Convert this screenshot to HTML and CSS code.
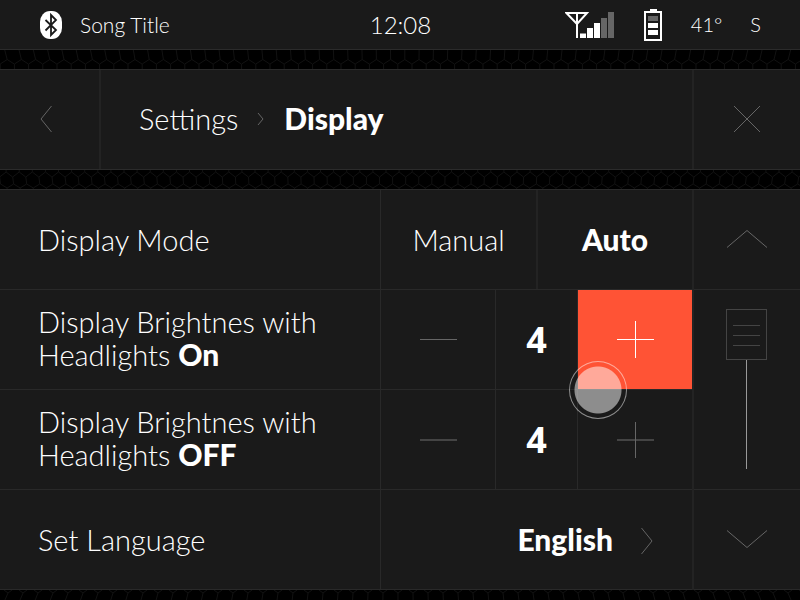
FILE: index.html
```html
<!DOCTYPE html>
<html lang="en">
<head>
<meta charset="utf-8">
<meta name="viewport" content="width=device-width, initial-scale=1">
<title>Settings – Display</title>
<link rel="stylesheet" href="styles.css">
</head>
<body>
<header class="status">
  <div class="status-left">
    <svg class="icon" width="22" height="28" viewBox="0 0 22 28" aria-hidden="true">
      <rect width="22" height="28" rx="10" ry="11" fill="#fff"/>
      <path d="M5.5 9 16 19 11 24V4l5 5L5.5 19.5" fill="none" stroke="#1a1a1a" stroke-width="1.8"/>
    </svg>
    <span>Song Title</span>
  </div>
  <time class="clock">12:08</time>
  <div class="status-right">
    <svg class="icon" width="50" height="26" viewBox="0 0 50 26" aria-hidden="true">
      <path d="M1.5 1H22L12 12ZM12 1v25" fill="none" stroke="#fff" stroke-width="2"/>
      <path d="M15 21.500h6V26h-6zM22 16h6v10h-6zM29 11h6v15h-6z" fill="#fff"/>
      <path d="M36 6h6v20h-6zM43 0h6v26h-6z" fill="#666"/>
    </svg>
    <svg class="icon" width="20" height="32" viewBox="0 0 20 32" aria-hidden="true">
      <path d="M2 3h16v28H2z" fill="none" stroke="#fff" stroke-width="2"/>
      <path d="M7 0h7v3H7zM5 14h10v5H5zM5 21h10v5H5z" fill="#fff"/>
      <path d="M5 7h10v5H5z" fill="#666"/>
    </svg>
    <span>41°</span>
    <span>S</span>
  </div>
</header>

<svg class="mesh" data-mesh="upper" aria-hidden="true"><path/></svg>

<nav class="titlebar" aria-label="Breadcrumb">
  <button class="back" type="button" aria-label="Back">
    <svg class="line-icon" width="12" height="28" viewBox="0 0 12 28"><path d="M11.500 1 1 14l10.500 13"/></svg>
  </button>
  <div class="crumbs">
    <a href="#settings">Settings</a>
    <svg class="line-icon" width="8" height="14" viewBox="0 0 8 14"><path d="M1 1l5 6-5 6"/></svg>
    <strong>Display</strong>
  </div>
  <button class="close" type="button" aria-label="Close">
    <svg class="line-icon" width="28" height="28" viewBox="0 0 28 28"><path d="M1 1l26 26M27 1 1 27"/></svg>
  </button>
</nav>

<svg class="mesh" data-mesh="middle" aria-hidden="true"><path/></svg>

<main class="panel">
  <section class="rows">
    <div class="row">
      <div class="label" id="mode">Display Mode</div>
      <div class="choice" role="group" aria-labelledby="mode">
        <button type="button" aria-pressed="false">Manual</button>
        <button type="button" aria-pressed="true">Auto</button>
      </div>
    </div>
    <div class="row">
      <div class="label" id="on">Display Brightnes with<br>Headlights <strong>On</strong></div>
      <div class="stepper" role="group" aria-labelledby="on">
        <button type="button" aria-label="Decrease">
          <svg class="line-icon" width="37" height="37" viewBox="0 0 37 37"><path d="M0 18.500h37"/></svg>
        </button>
        <output>4</output>
        <button class="active" type="button" aria-label="Increase">
          <svg class="line-icon" width="37" height="37" viewBox="0 0 37 37"><path d="M0 18.500h37M18.500 0v37"/></svg>
          <span class="touch"></span>
        </button>
      </div>
    </div>
    <div class="row">
      <div class="label" id="off">Display Brightnes with<br>Headlights <strong>OFF</strong></div>
      <div class="stepper" role="group" aria-labelledby="off">
        <button type="button" aria-label="Decrease">
          <svg class="line-icon" width="37" height="37" viewBox="0 0 37 37"><path d="M0 19h37" stroke="#444" stroke-width="2"/></svg>
        </button>
        <output>4</output>
        <button type="button" aria-label="Increase">
          <svg class="line-icon" width="37" height="37" viewBox="0 0 37 37"><path d="M0 19h37" stroke="#444" stroke-width="2"/><path d="M18.500 1v36"/></svg>
        </button>
      </div>
    </div>
    <div class="row">
      <div class="label" id="lang">Set Language</div>
      <button class="language" type="button" aria-describedby="lang">English
        <svg class="line-icon" width="12" height="28" viewBox="0 0 12 28"><path d="M.5 2 11 15 .5 28"/></svg>
      </button>
    </div>
  </section>
  <aside class="scroller">
    <button type="button" aria-label="Scroll up">
      <svg class="line-icon" width="42" height="20" viewBox="0 0 42 20"><path d="M1 18.500 21 1.500l20 17"/></svg>
    </button>
    <div class="track"><input type="range" min="0" max="100" value="0" aria-label="Scroll position"></div>
    <button type="button" aria-label="Scroll down">
      <svg class="line-icon" width="42" height="20" viewBox="0 0 42 20"><path d="M1 1.500l20 17 20-17"/></svg>
    </button>
  </aside>
</main>

<svg class="mesh mesh-last" data-mesh="lower" aria-hidden="true"><path/></svg>
<script src="mesh.js"></script>
</body>
</html>
```
FILE: styles.css
```css
* { box-sizing: border-box; }

body {
  margin: 0;
  min-height: 100vh;
  display: flex;
  flex-direction: column;
  background: #000;
  color: #fff;
  font-family: Lato, "Liberation Sans", sans-serif;
  font-size: 29px;
  font-weight: 300;
  line-height: 33px;
}

button {
  margin: 0;
  padding: 0;
  border: 0;
  background: none;
  color: inherit;
  font: inherit;
  display: flex;
  align-items: center;
  justify-content: center;
}

a { color: inherit; text-decoration: none; }

strong,
.choice [aria-pressed="true"],
.language {
  font-size: 30px;
  font-weight: 900;
}

svg { display: block; flex: none; }

.line-icon {
  fill: none;
  stroke: #666;
  stroke-width: 1;
}

.status {
  display: grid;
  grid-template-columns: 1fr auto 1fr;
  align-items: center;
  height: 50px;
  padding: 0 39px 0 40px;
  background: #1a1a1a;
  border-bottom: 1px solid #2b2b2b;
  font-size: 21px;
}

.status-left,
.status-right {
  display: flex;
  align-items: center;
}

.status-left { gap: 18px; }
.status-right { gap: 28px; justify-content: flex-end; font-size: 20px; }
.clock { font-size: 24px; }

.mesh {
  width: 100%;
  height: 19px;
  fill: none;
  stroke: #121212;
  stroke-width: 1;
}

.mesh-last { height: auto; flex: 1 0 10px; }

.titlebar {
  display: flex;
  height: 101px;
  background: #1a1a1a;
  border-top: 1px solid #2b2b2b;
  border-bottom: 1px solid #2b2b2b;
}

.titlebar > * { padding-bottom: 2px; }

.back {
  width: 101px;
  padding-right: 8px;
  border-right: 2px solid #232323;
}

.crumbs {
  flex: 1;
  display: flex;
  align-items: center;
  gap: 19px;
  padding-left: 38px;
}

.close {
  width: 13.5%;
  border-left: 2px solid #232323;
}

.panel {
  display: grid;
  grid-template-columns: 86.5% 13.5%;
  background: #1a1a1a;
  border-top: 1px solid #2b2b2b;
}

.row {
  display: grid;
  grid-template-columns: 380fr 312fr;
  min-height: 100px;
  border-bottom: 1px solid #292929;
}

.label {
  display: flex;
  flex-direction: column;
  justify-content: center;
  padding-left: 38px;
}

.label:has(strong) { display: block; padding-top: 15px; }

.choice,
.stepper {
  display: grid;
  border-left: 1px solid #292929;
}

.choice { grid-template-columns: 155fr 156fr; }
.choice button + button { border-left: 2px solid #232323; }

.stepper { grid-template-columns: 114fr 83fr 114fr; }

.stepper output {
  display: flex;
  align-items: center;
  justify-content: center;
  border-left: 1px solid #292929;
  border-right: 1px solid #292929;
  font-family: "Noto Sans", "Open Sans", sans-serif;
  font-size: 36px;
  font-weight: 700;
}

.stepper .active {
  position: relative;
  background: #ff5335;
}

.active .line-icon { stroke: #fff; }

.touch {
  position: absolute;
  left: -9px;
  bottom: -30px;
  z-index: 1;
  width: 58px;
  height: 58px;
  border: 1px solid rgba(255, 255, 255, 0.5);
  border-radius: 50%;
  background: radial-gradient(circle, rgba(255, 255, 255, 0.5) 23px, transparent 24px);
}

.language {
  gap: 28px;
  justify-content: flex-end;
  padding-right: 39px;
  border-left: 1px solid #292929;
}

.scroller {
  display: grid;
  grid-template-rows: 1fr 2fr 1fr;
  border-left: 2px solid #232323;
}

.scroller > * {
  padding: 0 1px 2px 0;
  border-bottom: 1px solid #292929;
}

.track {
  display: flex;
  align-items: center;
  justify-content: center;
}

input[type="range"] {
  appearance: none;
  writing-mode: vertical-lr;
  width: 41px;
  height: 160px;
  margin: 0;
  background: linear-gradient(#999, #999) center / 1px 100% no-repeat;
}

input[type="range"]::-webkit-slider-thumb {
  appearance: none;
  width: 41px;
  height: 51px;
  border: 1px solid #444;
  background:
    linear-gradient(#444, #444) 50% 15px / 27px 1px no-repeat,
    linear-gradient(#444, #444) 50% 25px / 27px 1px no-repeat,
    linear-gradient(#444, #444) 50% 35px / 27px 1px no-repeat,
    #1a1a1a;
}
```
FILE: mesh.js
```js
// Draws the honeycomb bands; cell walls lean outward away from the centre.
const bands = {
  upper(x, c) {
    const lean = (x - c) / c * 2.5;
    return `M${x + lean} 0L${x} 9.500L${x - 7} 14V19M${x} 9.500L${x + 7} 14`;
  },
  middle(x, c) {
    const lean = (x - c) / c;
    return `M${x} 0V2L${x - 6.5} 7L${x - 6.5 - lean} 14L${x - lean} 18V19M${x} 2L${x + 6.5} 7M${x - lean} 18L${x + 6.5 - lean} 14`;
  },
  lower(x, c) {
    const lean = (x - c) / c * 4;
    return `M${x - 4} 0L${x} 3L${x + 4} 0M${x} 3L${x + lean} 12`;
  }
};
const pitch = { upper: 14.2, middle: 13.1, lower: 15 };

function drawMeshes() {
  document.querySelectorAll("[data-mesh]").forEach(svg => {
    const name = svg.dataset.mesh;
    const centre = svg.clientWidth / 2;
    let d = "";
    for (let x = -7; x < svg.clientWidth + 20; x += pitch[name]) d += bands[name](x, centre);
    svg.firstElementChild.setAttribute("d", d);
  });
}

drawMeshes();
window.addEventListener("resize", drawMeshes);
```
